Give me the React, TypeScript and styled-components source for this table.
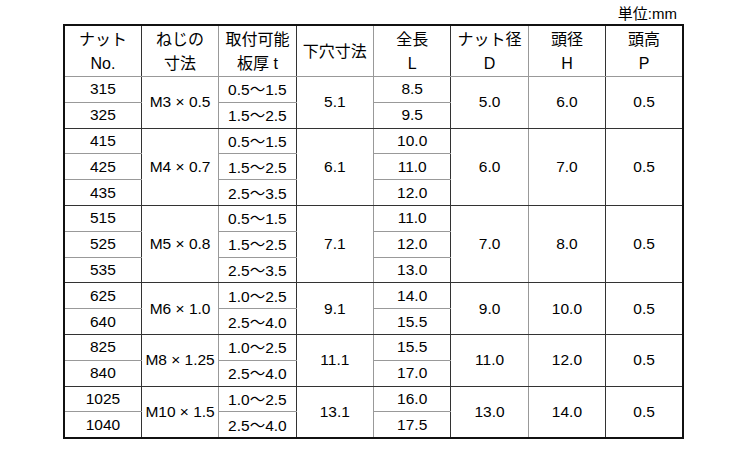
import styled, { createGlobalStyle } from "styled-components";

type Group = {
  nuts: string[];
  thread: string;
  plate: string[];
  hole: string;
  length: string[];
  d: string;
  h: string;
  p: string;
};

const groups: Group[] = [
  { nuts: ["315", "325"], thread: "M3 × 0.5", plate: ["0.5〜1.5", "1.5〜2.5"], hole: "5.1", length: ["8.5", "9.5"], d: "5.0", h: "6.0", p: "0.5" },
  { nuts: ["415", "425", "435"], thread: "M4 × 0.7", plate: ["0.5〜1.5", "1.5〜2.5", "2.5〜3.5"], hole: "6.1", length: ["10.0", "11.0", "12.0"], d: "6.0", h: "7.0", p: "0.5" },
  { nuts: ["515", "525", "535"], thread: "M5 × 0.8", plate: ["0.5〜1.5", "1.5〜2.5", "2.5〜3.5"], hole: "7.1", length: ["11.0", "12.0", "13.0"], d: "7.0", h: "8.0", p: "0.5" },
  { nuts: ["625", "640"], thread: "M6 × 1.0", plate: ["1.0〜2.5", "2.5〜4.0"], hole: "9.1", length: ["14.0", "15.5"], d: "9.0", h: "10.0", p: "0.5" },
  { nuts: ["825", "840"], thread: "M8 × 1.25", plate: ["1.0〜2.5", "2.5〜4.0"], hole: "11.1", length: ["15.5", "17.0"], d: "11.0", h: "12.0", p: "0.5" },
  { nuts: ["1025", "1040"], thread: "M10 × 1.5", plate: ["1.0〜2.5", "2.5〜4.0"], hole: "13.1", length: ["16.0", "17.5"], d: "13.0", h: "14.0", p: "0.5" },
];

const GlobalStyle = createGlobalStyle`
  html, body {
    margin: 0;
    padding: 0;
    background: #fff;
  }
  body {
    font-family: "Liberation Sans", Arial, "Noto Sans CJK JP", sans-serif;
    color: #000;
  }
`;

const Page = styled.div`
  width: 750px;
  height: 450px;
  padding: 3px 0 0 63px;
  box-sizing: border-box;
`;

const Unit = styled.div`
  width: 614px;
  text-align: right;
  font-size: 15px;
  line-height: 20px;
  font-family: "Noto Sans CJK JP", sans-serif;

  span {
    font-family: "Liberation Sans", sans-serif;
  }
`;

const Table = styled.table`
  width: 621px;
  table-layout: fixed;
  border-collapse: collapse;
  border: 2px solid #111;
`;

const HeadCell = styled.th<{ $dark?: boolean }>`
  height: 50px;
  padding: 0;
  font-weight: normal;
  font-size: 16px;
  line-height: 24px;
  text-align: center;
  vertical-align: middle;
  border-right: 1px solid ${(p) => (p.$dark ? "#333" : "#999")};
  border-bottom: 1px solid #999;
`;

const Cell = styled.td<{ $dark?: boolean; $edge?: boolean }>`
  height: 24.8px;
  padding: 0;
  font-size: 15.5px;
  line-height: 18px;
  text-align: center;
  vertical-align: middle;
  white-space: nowrap;
  border-right: 1px solid ${(p) => (p.$dark ? "#333" : "#999")};
  border-bottom: 1px solid ${(p) => (p.$edge ? "#333" : "#999")};
`;

const Jp = styled.span`
  font-family: "Noto Sans CJK JP", sans-serif;
`;

const headers: { top: string; bottom?: string }[] = [
  { top: "ナット", bottom: "No." },
  { top: "ねじの", bottom: "寸法" },
  { top: "取付可能", bottom: "板厚 t" },
  { top: "下穴寸法" },
  { top: "全長", bottom: "L" },
  { top: "ナット径", bottom: "D" },
  { top: "頭径", bottom: "H" },
  { top: "頭高", bottom: "P" },
];

const Wave = ({ text }: { text: string }) => {
  const [a, b] = text.split("〜");
  return (
    <>
      {a}
      <Jp>〜</Jp>
      {b}
    </>
  );
};

const App = () => {
  return (
    <>
      <GlobalStyle />
      <Page>
        <Unit>
          単位<span>:mm</span>
        </Unit>
        <Table>
          <thead>
            <tr>
              {headers.map((h, i) => (
                <HeadCell key={i} $dark={i % 2 === 0}>
                  <Jp>{h.top}</Jp>
                  {h.bottom && (
                    <>
                      <br />
                      {h.bottom}
                    </>
                  )}
                </HeadCell>
              ))}
            </tr>
          </thead>
          <tbody>
            {groups.map((g) =>
              g.nuts.map((nut, i) => {
                const n = g.nuts.length;
                const last = i === n - 1;
                return (
                  <tr key={nut}>
                    <Cell $dark $edge={last}>{nut}</Cell>
                    {i === 0 && (
                      <Cell rowSpan={n} $edge>
                        {g.thread}
                      </Cell>
                    )}
                    <Cell $dark $edge={last}>
                      <Wave text={g.plate[i]} />
                    </Cell>
                    {i === 0 && (
                      <Cell rowSpan={n} $edge>
                        {g.hole}
                      </Cell>
                    )}
                    <Cell $dark $edge={last}>{g.length[i]}</Cell>
                    {i === 0 && (
                      <>
                        <Cell rowSpan={n} $edge>
                          {g.d}
                        </Cell>
                        <Cell rowSpan={n} $dark $edge>
                          {g.h}
                        </Cell>
                        <Cell rowSpan={n} $edge>
                          {g.p}
                        </Cell>
                      </>
                    )}
                  </tr>
                );
              })
            )}
          </tbody>
        </Table>
      </Page>
    </>
  );
};

export default App;
